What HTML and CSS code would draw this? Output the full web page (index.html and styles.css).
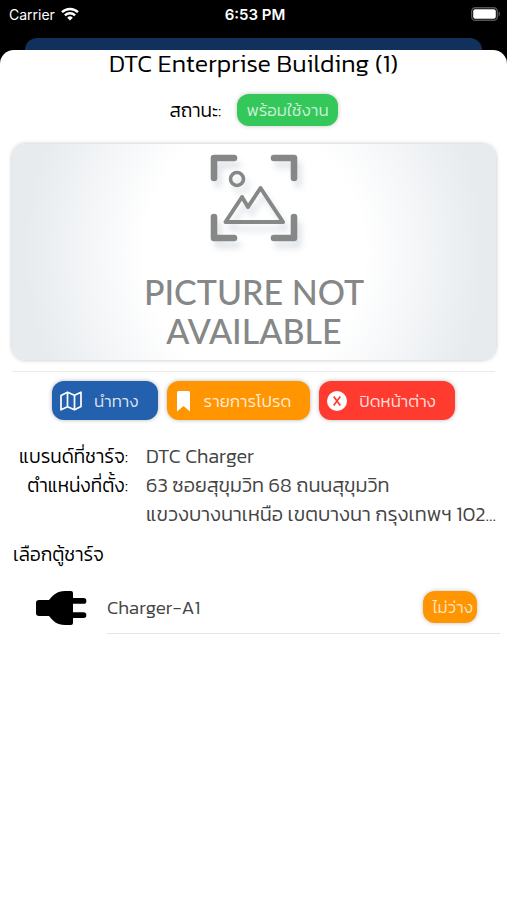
FILE: index.html
```html
<!DOCTYPE html>
<html lang="th">
<head>
  <meta charset="UTF-8" />
  <title>DTC Enterprise Building (1)</title>
  <meta name="viewport" content="width=device-width, initial-scale=1.0" />
  <link rel="stylesheet" href="styles.css">
</head>
<body>
  <div class="status-bar">
    <div class="carrier">
      <span>Carrier</span>
      <svg width="18" height="14" viewBox="0 0 18 14" fill="none" stroke="#fff" stroke-width="2.4">
        <path d="M1 5.2a11.5 11.5 0 0 1 16 0" />
        <path d="M3.9 8.3a7.3 7.3 0 0 1 10.2 0" />
        <path d="M9 13.6 6.2 10.7a4 4 0 0 1 5.6 0z" fill="#fff" stroke="none" />
      </svg>
    </div>
    <div class="clock">6:53 PM</div>
    <div class="battery">
      <svg width="30" height="14" viewBox="0 0 30 14">
        <rect x="0.7" y="0.7" width="25.6" height="12.6" rx="3.6" fill="none" stroke="#555" stroke-width="1.4" />
        <rect x="2.2" y="2.2" width="22.6" height="9.6" rx="2" fill="#fff" />
        <path d="M27.6 4.6c2 .8 2 4 0 4.8z" fill="#555" />
      </svg>
    </div>
  </div>

  <div class="back-card"></div>

  <main class="sheet">
    <h1>DTC Enterprise Building (1)</h1>

    <div class="state">
      <span>สถานะ:</span>
      <span class="badge badge-green">พร้อมใช้งาน</span>
    </div>

    <div class="picture">
      <svg class="picture-icon" width="88" height="88" viewBox="0 0 88 88" fill="none" stroke="#868787" stroke-linecap="round" stroke-linejoin="round">
        <g stroke-width="6.6">
          <path d="M4 24V4h20" />
          <path d="M64 4h20v20" />
          <path d="M4 63v21h20" />
          <path d="M64 84h20V63" />
        </g>
        <circle cx="27" cy="25" r="6.5" stroke-width="3.6" />
        <path d="M15.5 68 32 43l6 10 12.5-19L73 68z" stroke-width="4" />
      </svg>
      <p>PICTURE NOT<br>AVAILABLE</p>
    </div>

    <hr>

    <div class="actions">
      <button class="action action-blue" type="button">
        <svg width="22" height="20" viewBox="0 0 22 20" fill="none" stroke="#fff" stroke-width="1.7" stroke-linejoin="round">
          <path d="M1 4.5 7.5 1.2l7 3L21 1.2v14.3l-6.5 3.3-7-3L1 18.8z" />
          <path d="M7.5 1.2v14.6M14.5 4.2v14.6" />
        </svg>
        <span>นำทาง</span>
      </button>
      <button class="action action-orange" type="button">
        <svg width="17" height="22" viewBox="0 0 17 22" fill="#fff">
          <path d="M3.5 1h10A1.5 1.5 0 0 1 15 2.5v19L8.5 16 2 21.5v-19A1.5 1.5 0 0 1 3.5 1z" />
        </svg>
        <span>รายการโปรด</span>
      </button>
      <button class="action action-red" type="button">
        <svg width="20" height="20" viewBox="0 0 20 20">
          <circle cx="10" cy="10" r="10" fill="#fff" />
          <path d="M6.7 5.5l6.6 9M13.3 5.5l-6.6 9" stroke="#ff3b30" stroke-width="1.7" />
        </svg>
        <span>ปิดหน้าต่าง</span>
      </button>
    </div>

    <dl class="details">
      <dt>แบรนด์ที่ชาร์จ:</dt>
      <dd>DTC Charger</dd>
      <dt>ตำแหน่งที่ตั้ง:</dt>
      <dd>63 ซอยสุขุมวิท 68 ถนนสุขุมวิท<br>แขวงบางนาเหนือ เขตบางนา กรุงเทพฯ 102...</dd>
    </dl>

    <h2>เลือกตู้ชาร์จ</h2>

    <ul class="chargers">
      <li>
        <svg width="52" height="36" viewBox="0 0 52 36">
          <path d="M4 10h10C18 5 22 1 30 1h6q2 0 2 2v5h10.5a2.9 2.9 0 0 1 0 5.8H38v8.4h10.5a2.9 2.9 0 0 1 0 5.8H38v5q0 2-2 2h-6c-8 0-12-4-16-9H4q-3 0-3-3V13q0-3 3-3z" />
        </svg>
        <div class="charger">
          <span>Charger-A1</span>
          <span class="badge badge-orange">ไม่ว่าง</span>
        </div>
      </li>
    </ul>
  </main>
</body>
</html>
```
FILE: styles.css
```css
* {
  box-sizing: border-box;
}

body {
  margin: 0;
  min-height: 100vh;
  display: flex;
  flex-direction: column;
  background: #000;
  color: #000;
  font-family: Kanit, "Noto Sans Thai", "Noto Sans", sans-serif;
  font-weight: 300;
  font-size: 19px;
}

.status-bar {
  display: grid;
  grid-template-columns: 1fr auto 1fr;
  align-items: center;
  height: 38px;
  padding: 0 6px 10px 9px;
  color: #fff;
  font-family: Inter, sans-serif;
  font-size: 14px;
  font-weight: 400;
}

.carrier {
  display: flex;
  align-items: center;
  gap: 6px;
}

.clock {
  font-size: 15px;
  font-weight: 600;
}

.battery {
  display: flex;
  justify-content: flex-end;
}

.back-card {
  height: 28px;
  margin: 0 25px -16px;
  border-radius: 12px 12px 0 0;
  background: #12305c;
}

.sheet {
  flex: 1;
  border-radius: 14px 14px 0 0;
  background: #fff;
}

h1 {
  margin: 0;
  text-align: center;
  font-size: 25px;
  line-height: 26px;
  font-weight: 300;
}

.state {
  display: flex;
  justify-content: center;
  align-items: center;
  gap: 16px;
  margin-top: 18px;
}

.badge {
  padding: 0 9px;
  border-radius: 12px;
  color: rgba(255, 255, 255, 0.75);
  font-size: 17px;
  line-height: 32px;
  box-shadow: 0 0 4px rgba(0, 0, 0, 0.25);
}

.badge-green {
  background: #34c759;
}

.badge-orange {
  padding-right: 4px;
  background: #ff9500;
}

.picture {
  display: flex;
  flex-direction: column;
  align-items: center;
  height: 216px;
  margin: 18px 11px 0 12px;
  padding-top: 10px;
  border-radius: 14px;
  background: radial-gradient(ellipse 50% 130% at 50% 50%, #fff 45%, #f3f5f7 70%, #e7ebee 95%);
  box-shadow: 0 0 4px rgba(0, 0, 0, 0.25);
}

.picture-icon {
  overflow: visible;
  filter: drop-shadow(4px 7px 3px rgba(120, 145, 160, 0.25));
}

.picture p {
  margin: 30px 0 0;
  color: #868787;
  text-align: center;
  font-family: Lato, sans-serif;
  font-size: 34px;
  line-height: 39px;
  font-weight: 500;
}

hr {
  height: 1px;
  margin: 11px 12px 0;
  border: 0;
  background: #e9e9e9;
}

.actions {
  display: flex;
  justify-content: center;
  gap: 9px;
  margin-top: 9px;
}

.action {
  display: flex;
  align-items: center;
  gap: 12px;
  height: 39px;
  padding: 0 19px 0 8px;
  border: 0;
  border-radius: 12px;
  color: rgba(255, 255, 255, 0.85);
  font: inherit;
  font-size: 17px;
  box-shadow: 0 0 4px rgba(0, 0, 0, 0.3);
}

.action-blue {
  background: #2360ad;
}

.action-orange {
  background: #ff9500;
}

.action-red {
  background: #ff3b30;
}

.details {
  display: grid;
  grid-template-columns: 116px 1fr;
  column-gap: 18px;
  margin: 22px 12px 0;
  line-height: 29px;
}

dt {
  text-align: right;
  white-space: nowrap;
}

dd {
  margin: 0;
  white-space: nowrap;
  color: #444;
  font-size: 20px;
}

h2 {
  margin: 11px 13px 0;
  font-size: 19px;
  line-height: 30px;
  font-weight: 300;
}

.chargers {
  margin: 11px 7px 0 35px;
  padding: 0;
  list-style: none;
}

.chargers li {
  display: flex;
  align-items: center;
  gap: 20px;
}

.charger {
  flex: 1;
  display: flex;
  justify-content: space-between;
  align-items: center;
  height: 53px;
  padding-right: 23px;
  border-bottom: 1px solid #e5e5e5;
  color: #444;
}
```
